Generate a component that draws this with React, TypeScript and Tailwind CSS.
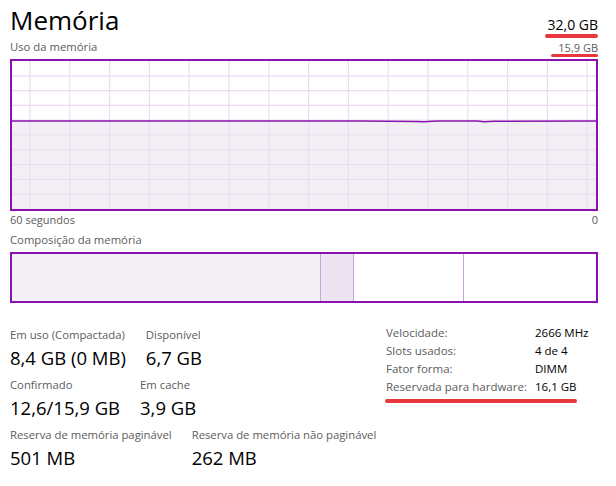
import React from 'react';

const font = { fontFamily: '"Open Sans", "Noto Sans", sans-serif' };

const vLines = Array.from({ length: 15 }, (_, i) => 18 + i * 39.8);
const hLines = Array.from({ length: 9 }, (_, i) => (i + 1) * 14.8);

const UsageChart = () => (
  <div className="h-[152px] w-full border-2 border-[#8b12ae] bg-white">
    <svg width="584" height="148" viewBox="0 0 584 148" className="block">
      <path
        d="M0 60 L350 60 L404 60.4 L412 60.8 L420 60.3 L428 60 L465 60 L472 60.7 L482 60.3 L584 60 L584 148 L0 148 Z"
        fill="#f2eff4"
      />
      {vLines.map((x) => (
        <line key={x} x1={x} y1={0} x2={x} y2={148} stroke="#ecdcf2" strokeWidth="1.2" />
      ))}
      {hLines.map((y) => (
        <line key={y} x1={0} y1={y} x2={584} y2={y} stroke="#ecdcf2" strokeWidth="1.2" />
      ))}
      <path
        d="M0 60 L350 60 L404 60.4 L412 60.8 L420 60.3 L428 60 L465 60 L472 60.7 L482 60.3 L584 60"
        fill="none"
        stroke="#8b12ae"
        strokeWidth="1.5"
      />
    </svg>
  </div>
);

const CompositionBar = () => (
  <div className="flex h-[51px] w-full border-2 border-[#8b12ae] bg-white">
    <div className="w-[308px] bg-[#f2f0f4]" />
    <div className="w-[33px] border-l border-[#c9a4da] bg-[#ede4f2]" />
    <div className="w-[110px] border-l border-[#c9a4da]" />
    <div className="flex-1 border-l border-[#c9a4da]" />
  </div>
);

const Stat = ({ label, value }: { label: string; value: string }) => (
  <div className="flex flex-col whitespace-nowrap">
    <span className="text-[11.3px] leading-[16px] text-[#5c5c5c]">{label}</span>
    <span className="mt-[2px] text-[18.5px] leading-[26px] text-black">{value}</span>
  </div>
);

const details = [
  ['Velocidade:', '2666 MHz'],
  ['Slots usados:', '4 de 4'],
  ['Fator forma:', 'DIMM'],
  ['Reservada para hardware:', '16,1 GB'],
];

export default function App() {
  return (
    <div className="h-[486px] w-[616px] overflow-hidden bg-white pl-[10px] pr-[18px] leading-none" style={font}>
      <div className="flex h-[37px] items-end justify-between">
        <h1 className="text-[26px] leading-[34px] font-normal text-black">Memória</h1>
        <div className="relative mb-[3px] leading-[18px]">
          <span className="text-[14px] leading-[18px] text-black">32,0 GB</span>
          <div className="absolute -left-[3px] right-0 top-[19px] h-[4px] rounded-full bg-[#e8383d]" />
        </div>
      </div>
      <div className="flex h-[18px] items-end justify-between">
        <span className="text-[11.3px] leading-[16px] text-[#5c5c5c]">Uso da memória</span>
        <div className="relative leading-[15px]">
          <span className="text-[11px] leading-[15px] text-[#5c5c5c]">15,9 GB</span>
          <div className="absolute -left-[7px] right-0 top-[15px] h-[3px] rounded-full bg-[#e8383d]" />
        </div>
      </div>
      <div className="pt-[4px]">
        <UsageChart />
      </div>
      <div className="flex justify-between pt-[1px] text-[11px] leading-[16px] text-[#5c5c5c]">
        <span>60 segundos</span>
        <span>0</span>
      </div>
      <div className="pt-[4px] text-[11.3px] leading-[16px] text-[#5c5c5c]">Composição da memória</div>
      <div className="pt-[4px]">
        <CompositionBar />
      </div>

      <div className="flex pt-[24px]">
        <div className="flex flex-1 flex-col gap-[6px]">
          <div className="flex gap-[20px]">
            <Stat label="Em uso (Compactada)" value="8,4 GB (0 MB)" />
            <Stat label="Disponível" value="6,7 GB" />
          </div>
          <div className="flex gap-[20px]">
            <Stat label="Confirmado" value="12,6/15,9 GB" />
            <Stat label="Em cache" value="3,9 GB" />
          </div>
          <div className="flex gap-[20px]">
            <Stat label="Reserva de memória paginável" value="501 MB" />
            <Stat label="Reserva de memória não paginável" value="262 MB" />
          </div>
        </div>
        <div className="relative -mt-[3px] w-[212px] self-start">
          <div className="grid grid-cols-[149px_1fr] whitespace-nowrap text-[11.5px] leading-[18px]">
            {details.map(([k, v]) => (
              <React.Fragment key={k}>
                <span className="text-[#5c5c5c]">{k}</span>
                <span className="text-black">{v}</span>
              </React.Fragment>
            ))}
          </div>
          <div className="absolute -left-[1px] right-[21px] top-[75px] h-[4px] rounded-full bg-[#e8383d]" />
        </div>
      </div>
    </div>
  );
}
